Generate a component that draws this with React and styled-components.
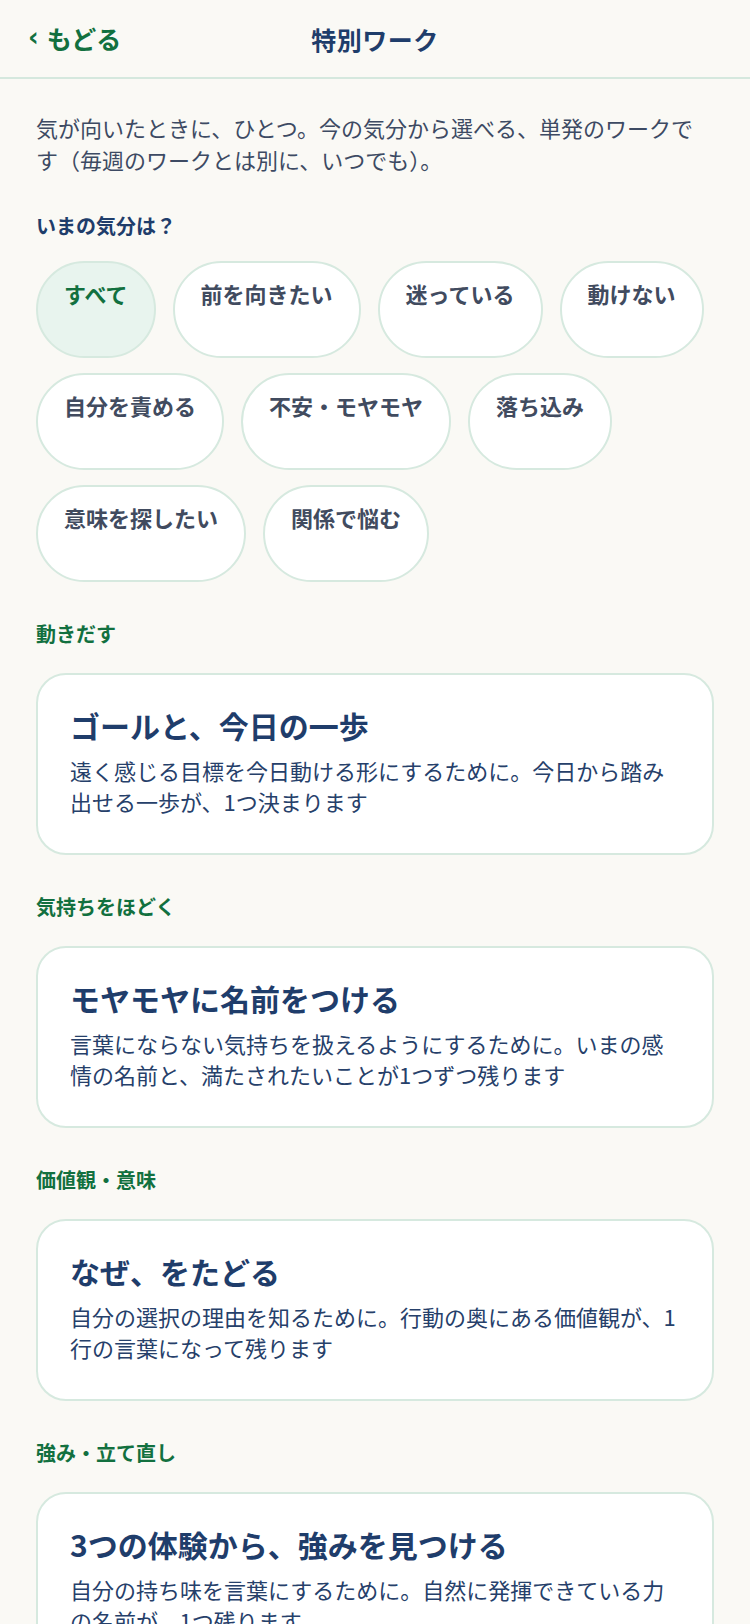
import React from "react";
import styled, { createGlobalStyle } from "styled-components";

const GlobalStyle = createGlobalStyle`
  html, body {
    margin: 0;
    padding: 0;
    background-color: #faf9f5;
  }
  body {
    font-family: "Noto Sans CJK JP", "Noto Sans", sans-serif;
    color: #3d4a63;
  }
  * {
    box-sizing: border-box;
  }
`;

const Page = styled.div`
  width: 750px;
  min-height: 1624px;
  background-color: #faf9f5;
`;

const Header = styled.header`
  position: relative;
  display: flex;
  align-items: center;
  justify-content: center;
  height: 79px;
  border-bottom: 2px solid #d5e8de;
`;

const Back = styled.button`
  position: absolute;
  left: 28px;
  top: 50%;
  transform: translateY(-52%);
  display: flex;
  align-items: center;
  gap: 8px;
  padding: 0;
  border: none;
  background: none;
  color: #12703f;
  font-family: inherit;
  font-size: 25px;
  font-weight: 700;
`;

const Chevron = styled.span`
  font-family: "DejaVu Sans", sans-serif;
  font-size: 26px;
  font-weight: 700;
  line-height: 1;
  transform: translateY(-1px);
`;

const Title = styled.h1`
  margin: 0;
  color: #1f3d6b;
  font-size: 25px;
  font-weight: 700;
  letter-spacing: 0.5px;
`;

const Content = styled.main`
  padding: 32px 36px 0;
`;

const Intro = styled.p`
  margin: 0;
  font-size: 22px;
  line-height: 32px;
  color: #3d4a63;
`;

const Question = styled.h2`
  margin: 36px 0 20px;
  color: #1f3d6b;
  font-size: 20px;
  font-weight: 700;
  line-height: 30px;
`;

const Chips = styled.div`
  display: flex;
  flex-wrap: wrap;
  gap: 15px 17px;
`;

const Chip = styled.button`
  height: 97px;
  padding: 14px 26px 0;
  display: flex;
  align-items: flex-start;
  border: 2px solid #d6e9df;
  border-radius: 999px;
  background-color: ${({ active }) => (active ? "#e8f4ee" : "#ffffff")};
  color: ${({ active }) => (active ? "#12703f" : "#414b5f")};
  font-family: inherit;
  font-size: 22px;
  font-weight: 700;
  line-height: 33px;
  white-space: nowrap;
`;

const Section = styled.section`
  margin-top: 37px;
`;

const SectionLabel = styled.h3`
  margin: 0 0 24px;
  color: #12703f;
  font-size: 20px;
  font-weight: 700;
  line-height: 30px;
`;

const Card = styled.div`
  padding: 29px 32px 36px;
  background-color: #ffffff;
  border: 2px solid #d6e9df;
  border-radius: 30px;
`;

const CardTitle = styled.h4`
  margin: 0 0 9px;
  color: #1f3d6b;
  font-size: 30px;
  font-weight: 700;
  line-height: 42px;
`;

const CardText = styled.p`
  margin: 0;
  color: #26406a;
  font-size: 22px;
  line-height: 31px;
`;

const moods = [
  "すべて",
  "前を向きたい",
  "迷っている",
  "動けない",
  "自分を責める",
  "不安・モヤモヤ",
  "落ち込み",
  "意味を探したい",
  "関係で悩む",
];

const works = [
  {
    label: "動きだす",
    title: "ゴールと、今日の一歩",
    text: "遠く感じる目標を今日動ける形にするために。今日から踏み出せる一歩が、1つ決まります",
  },
  {
    label: "気持ちをほどく",
    title: "モヤモヤに名前をつける",
    text: "言葉にならない気持ちを扱えるようにするために。いまの感情の名前と、満たされたいことが1つずつ残ります",
  },
  {
    label: "価値観・意味",
    title: "なぜ、をたどる",
    text: "自分の選択の理由を知るために。行動の奥にある価値観が、1行の言葉になって残ります",
  },
  {
    label: "強み・立て直し",
    title: "3つの体験から、強みを見つける",
    text: "自分の持ち味を言葉にするために。自然に発揮できている力の名前が、1つ残ります",
  },
];

const App = () => (
  <Page>
    <GlobalStyle />
    <Header>
      <Back>
        <Chevron>‹</Chevron>もどる
      </Back>
      <Title>特別ワーク</Title>
    </Header>
    <Content>
      <Intro>
        気が向いたときに、ひとつ。今の気分から選べる、単発のワークです（毎週のワークとは別に、いつでも）。
      </Intro>
      <Question>いまの気分は？</Question>
      <Chips>
        {moods.map((m, i) => (
          <Chip key={m} active={i === 0}>
            {m}
          </Chip>
        ))}
      </Chips>
      {works.map((w) => (
        <Section key={w.label}>
          <SectionLabel>{w.label}</SectionLabel>
          <Card>
            <CardTitle>{w.title}</CardTitle>
            <CardText>{w.text}</CardText>
          </Card>
        </Section>
      ))}
    </Content>
  </Page>
);

export default App;
